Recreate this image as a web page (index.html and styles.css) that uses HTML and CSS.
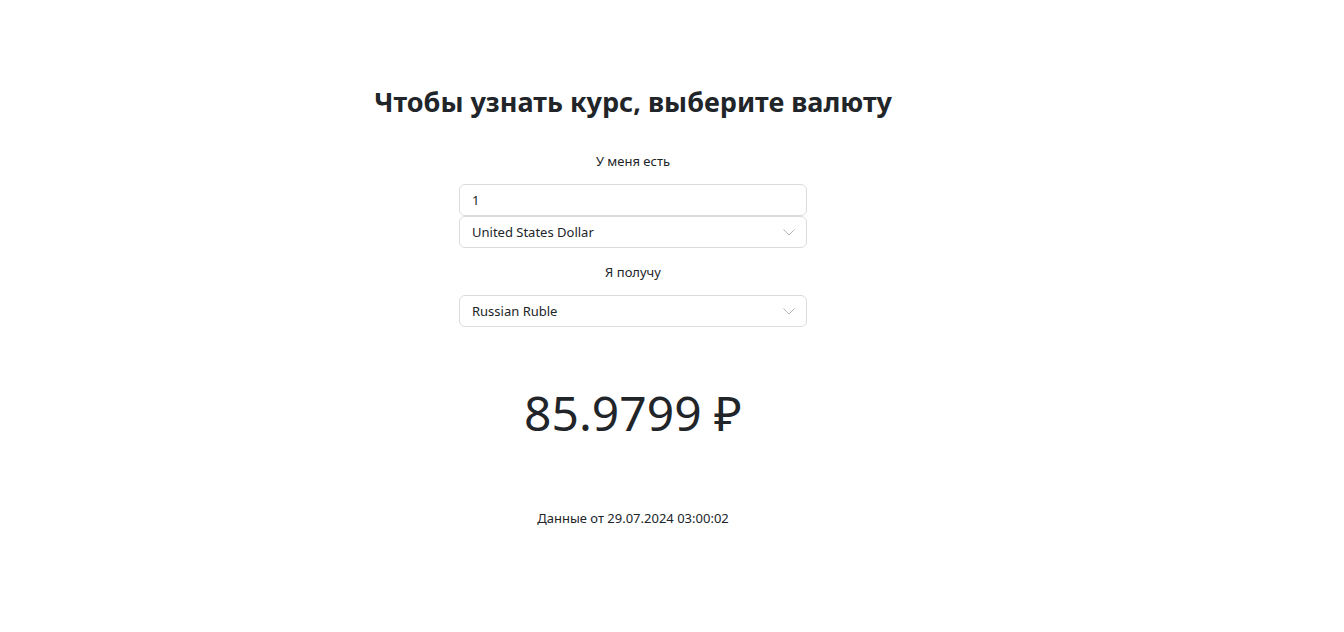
FILE: index.html
```html
<!DOCTYPE html>
<html lang="ru">
<head>
<meta charset="utf-8">
<title>Курс валют</title>
<link rel="stylesheet" href="styles.css">
</head>
<body>
<main class="page">
  <h1 class="title">Чтобы узнать курс, выберите валюту</h1>
  <section class="form">
    <div class="label">У меня есть</div>
    <div class="group">
      <div class="field">1</div>
      <div class="field select">
        <span>United States Dollar</span>
        <svg class="chev" width="12" height="7" viewBox="0 0 12 7"><path d="M0.5 0.5 L6 6 L11.5 0.5" fill="none" stroke="#b5b5b5" stroke-width="1"/></svg>
      </div>
    </div>
    <div class="label second">Я получу</div>
    <div class="group">
      <div class="field select">
        <span>Russian Ruble</span>
        <svg class="chev" width="12" height="7" viewBox="0 0 12 7"><path d="M0.5 0.5 L6 6 L11.5 0.5" fill="none" stroke="#b5b5b5" stroke-width="1"/></svg>
      </div>
    </div>
  </section>
  <div class="result">85.9799 ₽</div>
  <div class="date">Данные от 29.07.2024 03:00:02</div>
</main>
</body>
</html>
```

FILE: styles.css
```css
html, body {
  margin: 0;
  padding: 0;
  background: #ffffff;
}
body {
  font-family: "Noto Sans", "Open Sans", sans-serif;
  color: #212529;
}
.page {
  width: 1266px;
  padding-top: 85px;
  display: flex;
  flex-direction: column;
  align-items: center;
}
.title {
  margin: 0;
  font-size: 27px;
  line-height: 34px;
  font-weight: 700;
  color: #212529;
}
.form {
  width: 348px;
  margin-top: 32px;
  display: flex;
  flex-direction: column;
}
.label {
  text-align: center;
  font-size: 13px;
  line-height: 21px;
  margin-bottom: 12px;
}
.label.second {
  margin-top: 14px;
}
.group {
  display: flex;
  flex-direction: column;
}
.field {
  box-sizing: border-box;
  height: 32px;
  border: 1px solid #dcdcdc;
  border-radius: 6px;
  padding: 0 12px;
  font-size: 13px;
  display: flex;
  align-items: center;
  justify-content: space-between;
  color: #212529;
}
.chev {
  margin-right: -1px;
}
.result {
  margin-top: 57px;
  font-size: 48px;
  line-height: 58px;
  font-weight: 400;
}
.date {
  margin-top: 66px;
  font-size: 13px;
  line-height: 21px;
}
```
